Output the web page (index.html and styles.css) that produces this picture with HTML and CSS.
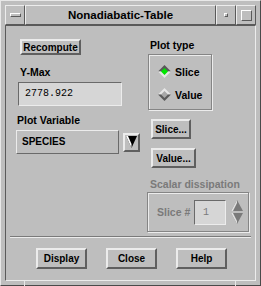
FILE: index.html
```html
<!DOCTYPE html>
<html lang="en">
<head>
  <meta charset="UTF-8" />
  <title>Nonadiabatic-Table</title>
  <link rel="stylesheet" href="styles.css">
</head>
<body>
  <div class="window">
    <div class="titlebar">
      <div class="tb-btn"><span class="menu-bar"></span></div>
      <div class="tb-title">Nonadiabatic-Table</div>
      <div class="tb-btn"><span class="min-dot"></span></div>
      <div class="tb-btn"><span class="max-box"></span></div>
    </div>

    <div class="client">
      <div class="panel">
        <div class="col-left">
          <button class="btn recompute">Recompute</button>
          <div class="label ymax">Y-Max</div>
          <div class="field">2778.922</div>
          <div class="label pvar">Plot Variable</div>
          <div class="option-row">
            <div class="option">SPECIES</div>
            <div class="drop">
              <svg width="11" height="12" viewBox="0 0 11 12">
                <polygon points="0,0 11,0 5.5,12" fill="#000"/>
                <polygon points="0,0 2,0 5.5,8 5.5,12" fill="#fff"/>
              </svg>
            </div>
          </div>
        </div>

        <div class="col-right">
          <div class="label ptype">Plot type</div>
          <div class="frame plot-frame">
            <div class="radio">
              <svg width="13" height="13" viewBox="0 0 13 13">
                <polygon points="0,6.5 6.5,0 13,6.5" fill="#5a5a5a"/>
                <polygon points="0,6.5 6.5,13 13,6.5" fill="#e6e6e6"/>
                <polygon points="3,6.5 6.5,3 10,6.5 6.5,10" fill="#00e600"/>
              </svg>
              <span>Slice</span>
            </div>
            <div class="radio">
              <svg width="13" height="13" viewBox="0 0 13 13">
                <polygon points="0,6.5 6.5,0 13,6.5" fill="#e6e6e6"/>
                <polygon points="0,6.5 6.5,13 13,6.5" fill="#5a5a5a"/>
                <polygon points="3,6.5 6.5,3 10,6.5 6.5,10" fill="#a8a8a8"/>
              </svg>
              <span>Value</span>
            </div>
          </div>
          <button class="btn small slice-btn">Slice...</button>
          <button class="btn small value-btn">Value...</button>
          <div class="label disabled sdiss">Scalar dissipation</div>
          <div class="frame scalar-frame">
            <span class="disabled slice-no">Slice #</span>
            <div class="field small-field">1</div>
            <div class="spin">
              <svg width="14" height="26" viewBox="0 0 14 26">
                <polygon points="7,1 13,12 1,12" fill="#7a7a7a"/>
                <polygon points="7,1 1,12 3,12 7,4" fill="#e0e0e0"/>
                <polygon points="1,14 13,14 7,25" fill="#7a7a7a"/>
                <polygon points="1,14 3,14 7,22 7,25" fill="#e0e0e0"/>
              </svg>
            </div>
          </div>
        </div>
      </div>

      <div class="sep"></div>

      <div class="actions">
        <button class="btn action">Display</button>
        <button class="btn action">Close</button>
        <button class="btn action">Help</button>
      </div>
    </div>
  </div>
</body>
</html>
```

FILE: styles.css
```css
* {
  margin: 0; padding: 0; box-sizing: border-box;
}
body {
  background-color: #bebebe;
  font-family: "Liberation Sans", Arial, sans-serif;
  font-weight: bold;
  font-size: 10.5px;
  color: #000;
}
.window {
  position: relative;
  width: 261px;
  height: 286px;
  background-color: #bebebe;
  border: 1px solid;
  border-color: #e8e8e8 #4a4a4a #4a4a4a #e8e8e8;
  padding: 4px;
}
/* resize handle notches */
.window::before,
.window::after {
  content: "";
  position: absolute;
  bottom: -1px;
  width: 1px;
  height: 5px;
  background: #e8e8e8;
}
.window::before { left: 23px; }
.window::after { right: 24px; }

.titlebar {
  display: flex;
  height: 20px;
}
.tb-btn, .tb-title {
  border: 1px solid;
  border-color: #ececec #5a5a5a #5a5a5a #ececec;
  display: flex;
  align-items: center;
  justify-content: center;
}
.tb-btn {
  width: 20px;
}
.tb-title {
  flex: 1;
  font-size: 11.5px;
}
.menu-bar {
  width: 11px;
  height: 4px;
  border: 1px solid;
  border-color: #fff #5a5a5a #5a5a5a #fff;
}
.min-dot {
  width: 4px;
  height: 4px;
  border: 1px solid;
  border-color: #fff #5a5a5a #5a5a5a #fff;
}
.max-box {
  width: 11px;
  height: 11px;
  border: 1px solid;
  border-color: #fff #5a5a5a #5a5a5a #fff;
}

.client {
  height: 256px;
  border: 1px solid;
  border-color: #5a5a5a #ececec #ececec #5a5a5a;
  padding-top: 13px;
}
.panel {
  display: flex;
  height: 197px;
  padding-left: 10px;
}
.col-left {
  width: 131px;
  display: flex;
  flex-direction: column;
  align-items: flex-start;
}
.col-right {
  display: flex;
  flex-direction: column;
  align-items: flex-start;
}

.label {
  line-height: 13px;
  height: 13px;
}
.disabled {
  color: #7a7a7a;
}

.btn {
  font-family: "Liberation Sans", Arial, sans-serif;
  font-weight: bold;
  font-size: 10px;
  background-color: #bebebe;
  color: #000;
  border: 2px solid;
  border-color: #ececec #5f5f5f #5f5f5f #ececec;
  padding: 0;
}
.recompute {
  margin-left: 4px;
  height: 16px;
  width: 61px;
}
.ymax {
  margin-top: 11px;
  margin-left: 4px;
}
.field {
  margin-top: 3px;
  margin-left: 2px;
  width: 104px;
  height: 24px;
  background-color: #d6d6d6;
  border: 1px solid;
  border-color: #6a6a6a #ececec #ececec #6a6a6a;
  font-family: "Liberation Mono", "DejaVu Sans Mono", monospace;
  font-weight: normal;
  font-size: 10px;
  line-height: 22px;
  padding-left: 6px;
}
.pvar {
  margin-top: 8px;
  margin-left: 1px;
}
.option-row {
  margin-top: 3px;
  display: flex;
  align-items: center;
  gap: 4px;
}
.option {
  width: 103px;
  height: 24px;
  border: 1px solid;
  border-color: #ececec #6a6a6a #6a6a6a #ececec;
  font-size: 10px;
  line-height: 22px;
  padding-left: 5px;
}
.drop {
  width: 17px;
  height: 19px;
  border: 2px solid;
  border-color: #ececec #5f5f5f #5f5f5f #ececec;
  display: flex;
  align-items: center;
  justify-content: center;
}

.col-right .label {
  margin-left: 3px;
}
.frame {
  border: 1px solid #858585;
  box-shadow: inset 1px 1px 0 #ececec, 1px 1px 0 #ececec;
}
.plot-frame {
  margin-top: 2px;
  margin-left: 1px;
  width: 64px;
  height: 56px;
  padding: 10px 0 0 9px;
  display: flex;
  flex-direction: column;
  gap: 10px;
}
.radio {
  display: flex;
  align-items: center;
  gap: 4px;
  height: 13px;
}
.small {
  height: 20px;
  margin-left: 4px;
}
.slice-btn {
  margin-top: 9px;
  width: 40px;
}
.value-btn {
  margin-top: 9px;
  width: 45px;
}
.sdiss {
  margin-top: 10px;
}
.scalar-frame {
  margin-top: 1px;
  width: 102px;
  height: 40px;
  display: flex;
  align-items: center;
  padding-left: 9px;
}
.slice-no {
  width: 37px;
}
.small-field {
  margin: 0;
  width: 32px;
  height: 25px;
  padding-left: 8px;
  line-height: 23px;
  color: #7a7a7a;
}
.spin {
  margin-left: 4px;
  display: flex;
}

.sep {
  margin: 0 4px;
  height: 2px;
  border-top: 1px solid #7a7a7a;
  border-bottom: 1px solid #ececec;
}
.actions {
  display: flex;
  padding-top: 10px;
  padding-left: 30px;
  gap: 19px;
}
.action {
  width: 51px;
  height: 21px;
}
```
